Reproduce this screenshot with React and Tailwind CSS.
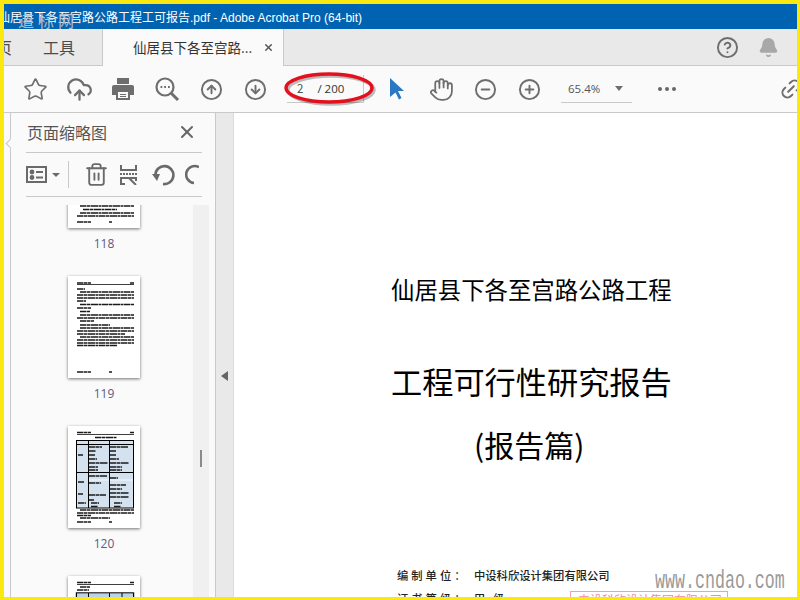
import { Star, CloudUpload, CircleArrowUp, CircleArrowDown, Hand, CircleMinus, CirclePlus, CircleHelp, Bell, X, Trash2, Link2 } from 'lucide-react';

const uiFont = { fontFamily: '"Noto Sans CJK SC", sans-serif' };

function ToolIcon({ children }) {
  return <div className="w-[44px] h-full flex items-center justify-center shrink-0 text-[#6e6e6e]">{children}</div>;
}

function ZoomOutIcon() {
  return (
    <svg width="26" height="26" viewBox="0 0 26 26" fill="none" stroke="#6e6e6e" strokeWidth="2.2">
      <circle cx="11" cy="11" r="8.5" />
      <path d="M17 17l7 7" strokeWidth="3" />
      <path d="M6.5 11h1.8M10.2 11H12M14 11h1.8" />
    </svg>
  );
}

function PrintIcon() {
  return (
    <svg width="24" height="24" viewBox="0 0 24 24" fill="#6e6e6e">
      <path d="M6 1h12v6H6z" />
      <path fillRule="evenodd" d="M3 8h18a2 2 0 0 1 2 2v8h-4v5H5v-5H1v-8a2 2 0 0 1 2-2zm4 7v6h10v-6zm2 2h6v1H9zm0 2h6v1H9z" />
    </svg>
  );
}

function CursorIcon() {
  return (
    <svg width="16" height="24" viewBox="0 0 16 24" fill="#2a78c2">
      <path d="M1 1l14 13h-6l3.5 7-2.5 1.5-3.5-7L1 20z" />
    </svg>
  );
}

function ThumbListIcon() {
  return (
    <svg width="21" height="18" viewBox="0 0 21 18" fill="none" stroke="#6a6a6a" strokeWidth="2">
      <rect x="1" y="1" width="19" height="15" />
      <circle cx="6" cy="6" r="1.4" fill="#6a6a6a" />
      <circle cx="6" cy="11.5" r="1.4" fill="#6a6a6a" />
      <path d="M10 6h7M10 11.5h7" />
    </svg>
  );
}

function CropPagesIcon() {
  return (
    <svg width="19" height="20" viewBox="0 0 19 20" fill="none" stroke="#6a6a6a" strokeWidth="2">
      <path d="M2 0v6M17 0v6M1 5h17" />
      <path d="M1 9h17" strokeDasharray="2 1" />
      <path d="M2 20v-7h8l7 7M1 19h5M11 13l6 0v3" />
    </svg>
  );
}

function RotateLeftIcon() {
  return (
    <svg width="23" height="23" viewBox="0 0 23 23" fill="none" stroke="#6a6a6a" strokeWidth="2.6">
      <path d="M11 21a9 9 0 1 0-7.6-9" />
      <path d="M0 11h8l-3 7z" fill="#6a6a6a" stroke="none" />
    </svg>
  );
}

function RotateRightCut() {
  return (
    <svg width="14" height="22" viewBox="0 0 14 22" fill="none" stroke="#6a6a6a" strokeWidth="2.6">
      <path d="M14 3.2A8.5 8.5 0 1 0 9 19" />
    </svg>
  );
}

// tiny text lines on a thumbnail page, dashed so they read as small words
function TextLines({ rows, x = 9 }) {
  return rows.map(([y, w, indent = 0], i) => (
    <line key={i} x1={x + indent} x2={x + indent + w} y1={y} y2={y} stroke="#1a1a1a" strokeWidth="1.5" strokeDasharray="6 0.5 3.5 0.5 8 0.5 2.5 0.5" />
  ));
}

const rows119 = [
  [7, 14], [7, 4, 53], [13, 8], [16, 54, 3], [19, 57], [22, 57], [25, 9], [28.5, 54, 3], [32, 14],
  [35.5, 10, 3], [39, 54, 3], [42, 57], [45, 14, 3], [49, 30, 3], [52, 54, 3], [55, 57], [58, 48],
  [61, 54, 3], [64, 57], [67, 57], [69.5, 40], [96, 14], [96, 3, 32],
];

const rows120Table = [
  [21, 13, 13], [21, 18, 34], [25, 7, 13], [25, 6, 34], [29, 5, 2], [29, 6, 13], [29, 6, 34],
  [33, 8, 13], [33, 9, 34], [37, 19, 13], [37, 19, 34], [41, 9, 13], [41, 12, 34], [44, 9, 13], [44, 12, 34],
  [50, 18, 13], [52, 8, 34], [56, 6, 2], [57, 12, 13], [59, 16, 34], [63, 12, 34], [67, 19, 34],
  [68, 5, 2], [69, 17, 13], [71, 19, 34], [74, 5, 13], [77, 8, 2], [77, 8, 15], [77, 8, 38], [80.5, 7, 15], [80.5, 7, 38],
];

function Thumb118() {
  return (
    <svg width="72" height="102" viewBox="0 0 72 102" className="block">
      <TextLines rows={[[80, 54, 3], [83.5, 34, 6], [87, 54, 3], [90, 57], [96, 14], [96, 3, 32]]} />
    </svg>
  );
}

function Thumb119() {
  return (
    <svg width="72" height="102" viewBox="0 0 72 102" className="block">
      <rect x="9" y="8" width="57" height="0.8" fill="#111" />
      <TextLines rows={rows119} />
    </svg>
  );
}

function Thumb120() {
  return (
    <svg width="72" height="102" viewBox="0 0 72 102" className="block">
      <rect x="9" y="8" width="57" height="0.8" fill="#111" />
      <TextLines rows={[[6.5, 14], [6.5, 4, 53], [11.5, 22, 18]]} />
      <rect x="8.5" y="14.5" width="57" height="67.5" fill="#d4e2f0" stroke="#000" />
      <path d="M20.5 15v67M41.5 15v67M9 46.5h56M9 18.5h56" stroke="#000" strokeWidth="1" fill="none" />
      <path d="M21 54h20M42 54h23" stroke="#f2f8f8" strokeWidth="1" />
      <TextLines rows={rows120Table} x={8} />
      <TextLines rows={[[84, 54, 3], [87, 57], [89.5, 14], [92, 30, 3], [96, 14], [96, 3, 32]]} />
    </svg>
  );
}

function Thumb121() {
  return (
    <svg width="72" height="102" viewBox="0 0 72 102" className="block">
      <rect x="9" y="8" width="57" height="0.8" fill="#111" />
      <TextLines rows={[[6.5, 14], [6.5, 4, 53], [11, 10, 3], [14, 12]]} />
      <rect x="8.5" y="17" width="57" height="60" fill="#fff" stroke="#000" strokeWidth="1.4" />
      <rect x="9" y="17.5" width="56" height="4" fill="#bcd2e8" />
      <path d="M20.5 17v60M41.5 17v60M54 17v60" stroke="#000" strokeWidth="1" />
    </svg>
  );
}

function ThumbPage({ label, children }) {
  return (
    <div className="h-[150px] flex flex-col items-center shrink-0">
      <div className="w-[72px] h-[102px] bg-white shadow-[0_1px_3px_rgba(0,0,0,0.55)]">{children}</div>
      <div className="mt-[6px] text-[12px] leading-[20px] text-[#5d5a80]" style={{ fontFamily: '"Open Sans", sans-serif' }}>{label}</div>
    </div>
  );
}

export default function App() {
  return (
    <div className="relative w-[800px] h-[600px] overflow-hidden bg-white border-t-[4px] border-b-[3px] border-l-[4px] border-r-[3px] border-[#fbe80e] flex flex-col" style={uiFont}>
      {/* Title bar */}
      <div className="h-[25px] bg-[#0063b1] text-white text-[12px] leading-[25px] whitespace-nowrap overflow-hidden shrink-0">
        <span className="ml-[-6px] inline-block" style={{ fontFamily: '"Liberation Sans", "Noto Sans CJK SC", sans-serif' }}>仙居县下各至宫路公路工程工可报告.pdf - Adobe Acrobat Pro (64-bit)</span>
      </div>

      {/* Tab bar */}
      <div className="h-[37px] bg-[#e9e9e9] border-b border-[#c9c9c9] flex shrink-0 text-[#4b4b4b]">
        <div className="w-[99px] h-full border-r border-[#c9c9c9] overflow-hidden flex items-center text-[16px]">
          <span className="ml-[-8px]">页</span>
          <span className="ml-[31px]">工具</span>
        </div>
        <div className="w-[181px] h-[37px] bg-[#fafafa] border-r border-[#c9c9c9] flex items-center pl-[30px] text-[13.5px] text-[#333]">
          <span className="whitespace-nowrap">仙居县下各至宫路...</span>
          <X size={11} strokeWidth={3} className="ml-[11px] text-[#555] shrink-0" />
        </div>
        <div className="ml-auto flex items-center h-full text-[#6e6e6e]">
          <CircleHelp size={23} strokeWidth={2} className="mr-[19px]" />
          <Bell size={21} fill="#a8a8a8" stroke="#a8a8a8" className="mr-[18px]" />
        </div>
      </div>

      {/* Toolbar */}
      <div className="h-[47px] bg-[#fafafa] border-b border-[#c9c9c9] flex items-center pl-[9px] shrink-0 overflow-hidden">
        <ToolIcon><Star size={25} strokeWidth={1.6} /></ToolIcon>
        <ToolIcon><CloudUpload size={27} strokeWidth={2} /></ToolIcon>
        <ToolIcon><PrintIcon /></ToolIcon>
        <ToolIcon><ZoomOutIcon /></ToolIcon>
        <ToolIcon><CircleArrowUp size={23} strokeWidth={2} /></ToolIcon>
        <ToolIcon><CircleArrowDown size={23} strokeWidth={2} /></ToolIcon>
        <div className="w-[98px] h-full shrink-0 flex items-center pl-[10px]">
          <div className="w-[77px] h-[28px] border-b border-[#c9c9c9] border-r flex items-center text-[11.5px] text-[#333]">
            <span className="ml-[10px] text-[#555]">2</span>
            <span className="ml-[14px]" style={{ fontFamily: '"Open Sans", sans-serif' }}>/ 200</span>
          </div>
        </div>
        <ToolIcon><CursorIcon /></ToolIcon>
        <ToolIcon><Hand size={25} strokeWidth={1.7} /></ToolIcon>
        <ToolIcon><CircleMinus size={23} strokeWidth={2} /></ToolIcon>
        <ToolIcon><CirclePlus size={23} strokeWidth={2} /></ToolIcon>
        <div className="ml-[10px] w-[71px] h-[28px] border-b border-[#c9c9c9] flex items-center shrink-0 text-[11.5px] text-[#555]" style={{ fontFamily: '"Open Sans", sans-serif' }}>
          <span className="ml-[7px]">65.4%</span>
          <span className="ml-[15px] w-0 h-0 border-x-[4px] border-x-transparent border-t-[5px] border-t-[#6e6e6e]" />
        </div>
        <div className="ml-[13px] w-[44px] flex justify-center gap-[3px] shrink-0">
          <span className="w-[4px] h-[4px] rounded-full bg-[#666]" />
          <span className="w-[4px] h-[4px] rounded-full bg-[#666]" />
          <span className="w-[4px] h-[4px] rounded-full bg-[#666]" />
        </div>
        <div className="ml-[90px] shrink-0 text-[#6e6e6e]"><Link2 size={24} strokeWidth={2} className="-rotate-45" /></div>
      </div>

      {/* Main area */}
      <div className="flex-1 flex min-h-0">
        {/* nav strip */}
        <div className="relative w-[7px] border-r border-[#c9c9c9] bg-[#fafafa] shrink-0">
          <div className="absolute top-[27px] right-[-4px] w-[7px] h-[7px] rotate-45 bg-[#fafafa] border-l border-b border-[#c9c9c9]" />
        </div>

        {/* thumbnails panel */}
        <div className="w-[205px] bg-[#fafafa] border-r border-[#c9c9c9] shrink-0 flex flex-col min-h-0">
          <div className="ml-[15px] w-[176px] h-[40px] pb-[2px] border-b border-[#c9c9c9] flex items-center justify-between shrink-0">
            <span className="text-[16px] text-[#555] ml-[1px]">页面缩略图</span>
            <X size={20} strokeWidth={2.4} className="text-[#666] mr-[5px]" />
          </div>
          <div className="ml-[15px] w-[176px] h-[44px] border-b border-[#c9c9c9] flex items-center shrink-0 overflow-hidden">
            <ThumbListIcon />
            <span className="ml-[5px] w-0 h-0 border-x-[4px] border-x-transparent border-t-[4px] border-t-[#6a6a6a]" />
            <span className="ml-[8px] w-px h-[27px] bg-[#c9c9c9]" />
            <Trash2 size={25} strokeWidth={1.8} className="ml-[15px] text-[#6a6a6a] shrink-0" />
            <span className="ml-[10px]"><CropPagesIcon /></span>
            <span className="ml-[14px]"><RotateLeftIcon /></span>
            <span className="ml-[10px]"><RotateRightCut /></span>
          </div>
          <div className="mt-[8px] flex-1 min-h-0 flex overflow-hidden">
            <div className="w-[182px] overflow-hidden">
              <div className="mt-[-79px] flex flex-col pl-[4px]">
                <ThumbPage label="118"><Thumb118 /></ThumbPage>
                <ThumbPage label="119"><Thumb119 /></ThumbPage>
                <ThumbPage label="120"><Thumb120 /></ThumbPage>
                <ThumbPage label="121"><Thumb121 /></ThumbPage>
              </div>
            </div>
            <div className="w-[16px] bg-[#f0f0f0] flex justify-center pt-[245px]">
              <div className="w-[2px] h-[17px] bg-[#8a8a8a]" />
            </div>
          </div>
        </div>

        {/* collapse strip */}
        <div className="w-[18px] bg-[#e9e9e9] shrink-0 flex items-center justify-center border-r border-[#dcdcdc]">
          <span className="mb-[-42px] w-0 h-0 border-y-[5px] border-y-transparent border-r-[7px] border-r-[#666]" />
        </div>

        {/* document page */}
        <div className="flex-1 bg-white overflow-hidden text-black flex flex-col">
          <div className="mt-[161px] ml-[157px] text-[23.4px] leading-[30px] whitespace-nowrap">仙居县下各至宫路公路工程</div>
          <div className="mt-[55px] ml-[157px] text-[31.2px] leading-[44px] whitespace-nowrap">工程可行性研究报告</div>
          <div className="mt-[21px] ml-[240px] text-[30px] leading-[40px] whitespace-nowrap">(报告篇)</div>
          <div className="mt-[103px] ml-[163px] flex text-[11.3px] leading-[16px] whitespace-nowrap font-medium text-[#222]">
            <span className="w-[77px] tracking-[3px]">编制单位：</span>
            <span>中设科欣设计集团有限公司</span>
          </div>
          <div className="mt-[7px] ml-[163px] flex text-[11.3px] leading-[16px] whitespace-nowrap font-medium text-[#222]">
            <span className="w-[77px] tracking-[3px]">证书等级：</span>
            <span className="tracking-[8px]">甲级</span>
          </div>
        </div>
      </div>

      {/* Red annotation around the page number */}
      <svg className="absolute left-[277px] top-[65px] pointer-events-none" width="98" height="40" viewBox="0 0 98 40" fill="none">
        <ellipse cx="50" cy="21" rx="43" ry="14" stroke="#00000040" strokeWidth="3.5" />
        <ellipse cx="48" cy="19" rx="43" ry="14" stroke="#e5101e" strokeWidth="3.5" />
      </svg>

      {/* Site watermarks */}
      <div className="absolute left-[14px] top-[6px] text-[16px] tracking-[4px] text-[#aebccb] whitespace-nowrap pointer-events-none" style={{ fontFamily: '"Liberation Serif", "Noto Sans CJK SC", serif' }}>道标网</div>
      <div className="absolute left-[566px] top-[587px] w-[158px] h-[20px] border border-[#f0a0b0] text-[#f08ca0] text-[12px] leading-[16px] pl-[7px] whitespace-nowrap overflow-hidden pointer-events-none">中设科欣设计集团有限公司</div>
      <div className="absolute left-[651px] top-[563px] text-[26px] leading-[28px] text-[#9a9a9a] whitespace-nowrap pointer-events-none" style={{ fontFamily: '"Liberation Mono", monospace', transform: 'scaleX(0.64)', transformOrigin: 'left' }}>www.cndao.com</div>
    </div>
  );
}
